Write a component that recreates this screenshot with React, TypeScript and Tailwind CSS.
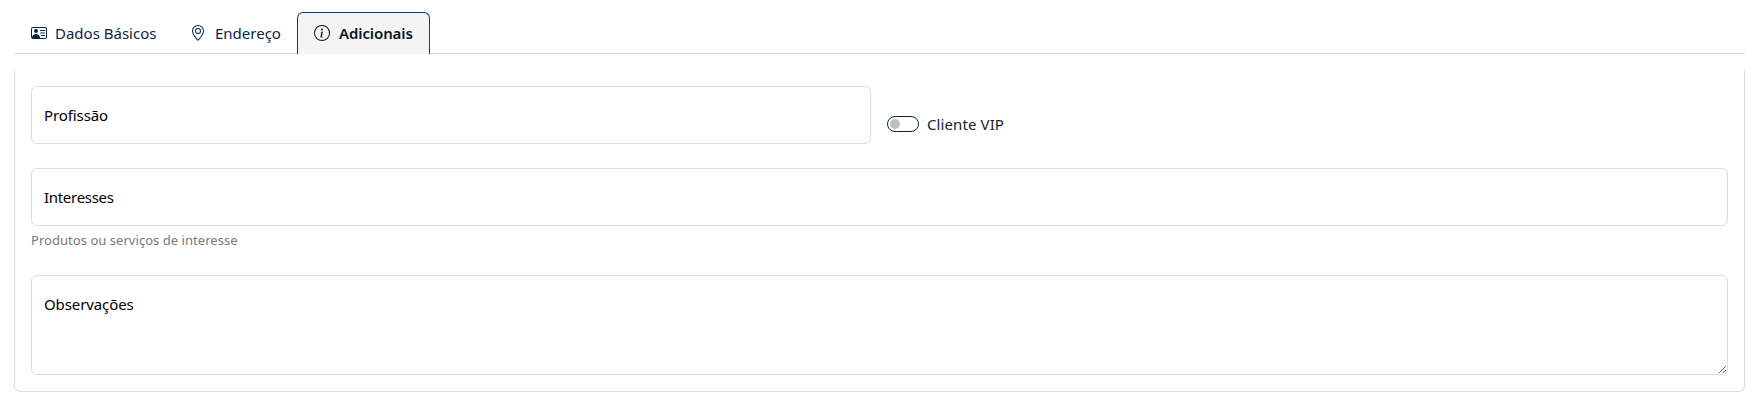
import { BsGeoAlt, BsInfoCircle, BsPersonVcard } from 'react-icons/bs';

const fieldBox = 'block w-full rounded-md border border-[#dcdddf] bg-white px-3 text-[15px] outline-none';
const fieldLabel = 'pointer-events-none absolute left-[13px] top-[17px] text-[15px] leading-6 text-black';

export default function App() {
  return (
    <div className="h-[401px] bg-white pl-[14px] pr-[9px] pt-3 font-['Noto_Sans',sans-serif] text-[15px] leading-6">
      <nav className="flex h-[42px] border-b border-[#dcdddf] text-[#0a2647]">
        <button className="flex h-[42px] w-[159px] items-center gap-2 whitespace-nowrap pl-[17px]">
          <BsPersonVcard className="size-4 shrink-0" />
          <span>Dados Básicos</span>
        </button>
        <button className="flex h-[42px] w-[124px] items-center gap-2 whitespace-nowrap pl-[17px]">
          <BsGeoAlt className="size-4 shrink-0" />
          <span className="pl-px">Endereço</span>
        </button>
        <button className="flex h-[42px] w-[133px] items-center gap-2 whitespace-nowrap rounded-t-md border border-b-0 border-[#0a3d6e] bg-[#f4f4f4] pb-px pl-4 font-semibold text-[#0a1628]">
          <BsInfoCircle className="size-4 shrink-0" />
          <span className="pl-px tracking-[-0.1px]">Adicionais</span>
        </button>
      </nav>

      <section className="mt-4 h-[322px] rounded-b-md border border-t-0 border-[#dcdddf] px-4 pt-4">
        <div className="flex gap-4">
          <div className="relative w-[840px]">
            <input id="profissao" className={`${fieldBox} h-[58px]`} />
            <label htmlFor="profissao" className={`${fieldLabel} tracking-[-0.1px]`}>Profissão</label>
          </div>
          <label className="mt-[26px] flex h-6 items-center gap-2 text-[#212529]">
            <span className="flex h-4 w-8 items-center rounded-full border border-[#0a2647] pl-0.5">
              <span className="size-[10px] rounded-full bg-[#bfbfbf]" />
            </span>
            <span className="tracking-[0.1px]">Cliente VIP</span>
          </label>
        </div>

        <div className="relative mt-6">
          <input id="interesses" className={`${fieldBox} h-[58px]`} />
          <label htmlFor="interesses" className={`${fieldLabel} tracking-[-0.3px]`}>Interesses</label>
        </div>
        <p className="mt-1 text-[13px] leading-[21px] tracking-[0.04px] text-[#75797d]">Produtos ou serviços de interesse</p>

        <div className="relative mt-6">
          <textarea id="observacoes" className={`${fieldBox} h-[100px] resize-y`} />
          <label htmlFor="observacoes" className={`${fieldLabel} tracking-[-0.1px]`}>Observações</label>
        </div>
      </section>
    </div>
  );
}
